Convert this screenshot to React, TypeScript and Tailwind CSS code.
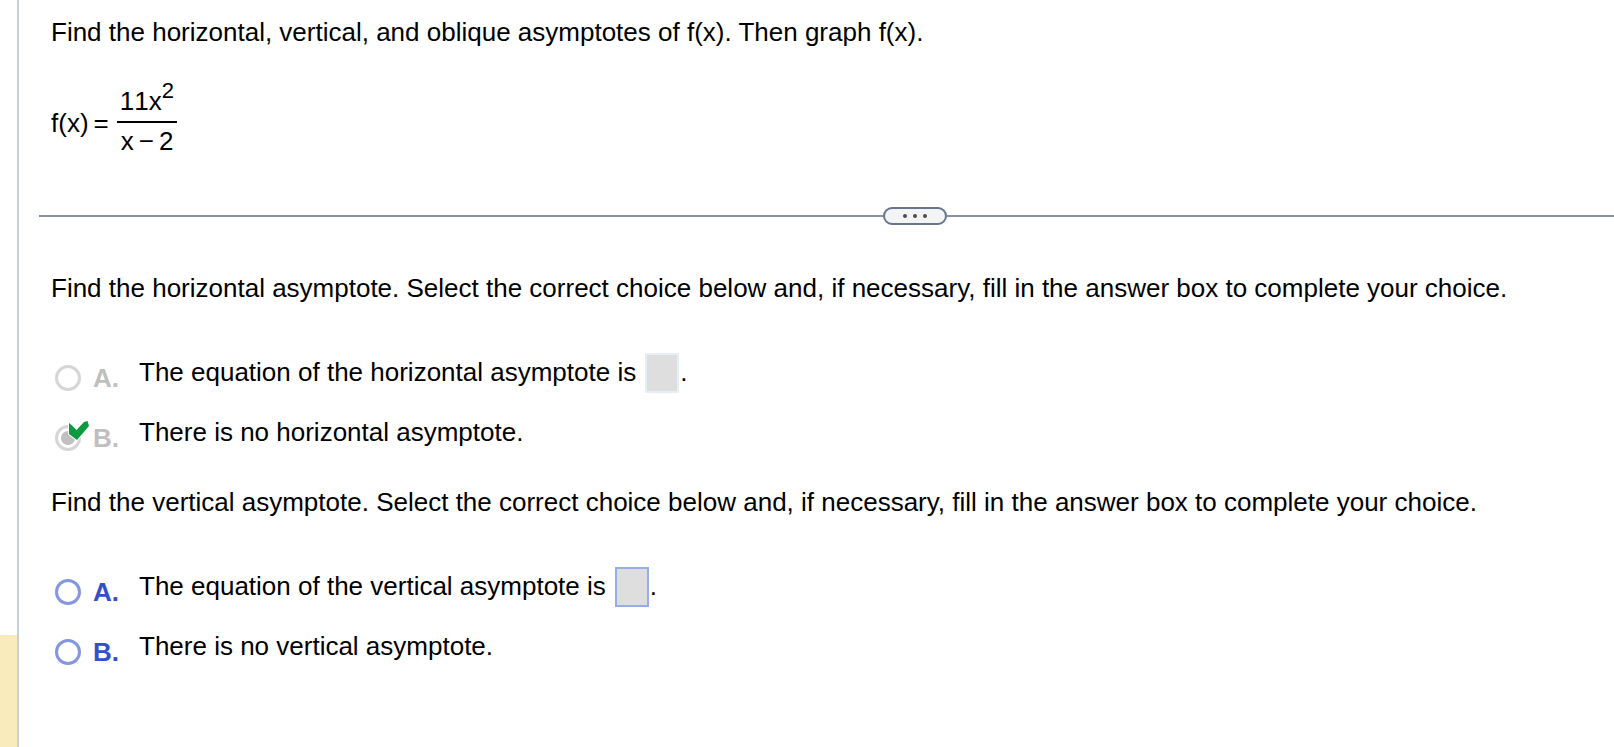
import { useState } from "react";
import type { ReactNode } from "react";

type ChoiceProps = {
  group: string;
  letter: string;
  selected: boolean;
  locked?: boolean;
  correct?: boolean;
  onSelect?: () => void;
  children: ReactNode;
};

function CorrectMark() {
  return (
    <svg
      viewBox="0 0 20 20"
      className="absolute -top-1 left-3.5 size-5 overflow-visible"
      role="img"
      aria-label="Correct"
    >
      <path
        d="M0 2 L0 13 L8 19 L20 5 L18.5 0 L15 1 L7.5 9 L3 4.5 Z"
        fill="#0b9a3e"
        stroke="#ffffff"
        strokeWidth="2"
        paintOrder="stroke"
      />
    </svg>
  );
}

function Choice({ group, letter, selected, locked, correct, onSelect, children }: ChoiceProps) {
  const id = `${group}-${letter}`;
  return (
    <div className="flex min-h-10 items-start">
      <div className="relative mt-3 flex size-[26px] shrink-0">
        <input
          type="radio"
          id={id}
          name={group}
          checked={selected}
          disabled={locked}
          onChange={onSelect}
          className="peer size-[26px] appearance-none rounded-full border-3 border-[#8496e1] bg-white disabled:border-[#d6d6d6]"
        />
        <span className="pointer-events-none absolute inset-1.5 hidden rounded-full bg-[#2f50c8] peer-checked:block peer-disabled:bg-[#c0c0c0]" />
        {correct && <CorrectMark />}
      </div>
      <label
        htmlFor={id}
        className={
          locked
            ? "mt-2.5 ml-3 w-[46px] shrink-0 font-bold text-[#bfbfbf]"
            : "mt-2.5 ml-3 w-[46px] shrink-0 font-bold text-[#3350c8]"
        }
      >
        {letter}.
      </label>
      <div className="flex items-start">{children}</div>
    </div>
  );
}

function AnswerBox({ label, locked }: { label: string; locked?: boolean }) {
  return (
    <input
      type="text"
      aria-label={label}
      disabled={locked}
      className="mr-px ml-[9px] h-10 w-[34px] border-2 border-[#96aee6] bg-[#dedede] text-center disabled:border-[#e8eef8]"
    />
  );
}

export default function App() {
  const [vertical, setVertical] = useState("");

  return (
    <div className="flex min-h-screen bg-white font-['Liberation_Sans',Arial,sans-serif] text-[26px] leading-[30px] text-black">
      <aside className="flex w-[19px] shrink-0 flex-col border-r-2 border-[#c9cede]">
        <div className="mt-[635px] grow bg-[#f9ebbb]" />
      </aside>

      <main className="min-w-0 grow pt-[17px] pl-5">
        <section className="pl-3">
          <p>Find the horizontal, vertical, and oblique asymptotes of f(x). Then graph f(x).</p>
          <div className="mt-[31px] flex items-center [font-kerning:none]">
            <span className="mt-3">f(x)</span>
            <span className="mt-3 ml-[5px]">=</span>
            <span className="ml-2 flex flex-col">
              <span className="border-b-2 border-black px-[3px] pt-2 pb-[5px]">
                11x<sup className="-top-3 text-[22px] leading-none">2</sup>
              </span>
              <span className="flex gap-[5px] px-1 pt-[3px]">
                <span>x</span>
                <span>−</span>
                <span>2</span>
              </span>
            </span>
          </div>
        </section>

        <div className="mt-[51px] flex items-center">
          <div className="h-0.5 w-[844px] shrink bg-[#8791a6]" />
          <button
            type="button"
            aria-label="Resize panels"
            className="flex h-[18px] w-16 shrink-0 items-center justify-center gap-1.5 rounded-full border-2 border-[#66758a] bg-[#f2f4f6]"
          >
            <span className="size-1 rounded-full bg-[#4d4d4d]" />
            <span className="size-1 rounded-full bg-[#4d4d4d]" />
            <span className="size-1 rounded-full bg-[#4d4d4d]" />
          </button>
          <div className="h-0.5 grow bg-[#8791a6]" />
        </div>

        <section className="mt-12 pl-3">
          <p>
            Find the horizontal asymptote. Select the correct choice below and, if necessary, fill in
            the answer box to complete your choice.
          </p>
          <div className="mt-[50px] flex flex-col gap-5 pl-1">
            <Choice group="horizontal" letter="A" selected={false} locked>
              <span className="mt-1">The equation of the horizontal asymptote is</span>
              <AnswerBox label="Horizontal asymptote" locked />
              <span className="mt-1">.</span>
            </Choice>
            <Choice group="horizontal" letter="B" selected locked correct>
              <span className="mt-1">There is no horizontal asymptote.</span>
            </Choice>
          </div>
        </section>

        <section className="mt-[34px] pl-3">
          <p>
            Find the vertical asymptote. Select the correct choice below and, if necessary, fill in
            the answer box to complete your choice.
          </p>
          <div className="mt-[50px] flex flex-col gap-5 pl-1">
            <Choice
              group="vertical"
              letter="A"
              selected={vertical === "A"}
              onSelect={() => setVertical("A")}
            >
              <span className="mt-1">The equation of the vertical asymptote is</span>
              <AnswerBox label="Vertical asymptote" />
              <span className="mt-1">.</span>
            </Choice>
            <Choice
              group="vertical"
              letter="B"
              selected={vertical === "B"}
              onSelect={() => setVertical("B")}
            >
              <span className="mt-1">There is no vertical asymptote.</span>
            </Choice>
          </div>
        </section>
      </main>
    </div>
  );
}
